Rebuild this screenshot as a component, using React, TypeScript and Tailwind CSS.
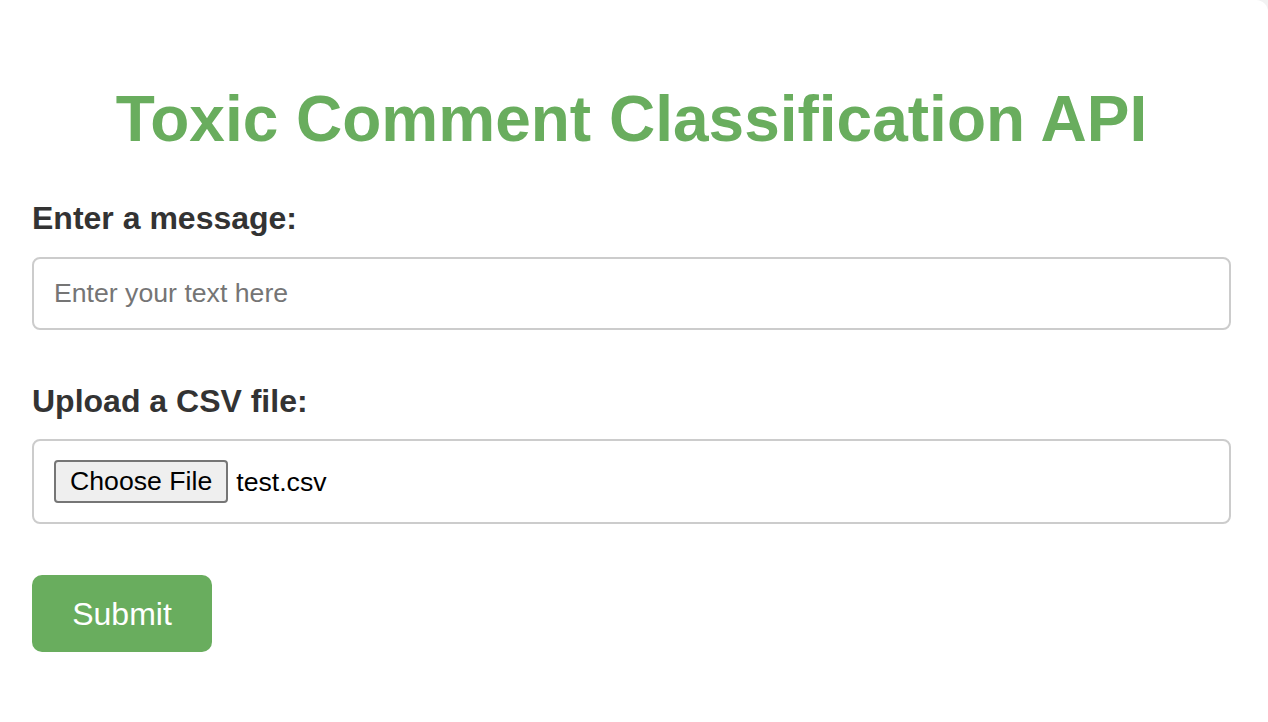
export default function App() {
  return (
    <div className="min-h-screen bg-[#f2f2f2] font-['Liberation_Sans',Arial,sans-serif]">
      <div className="min-h-[722px] bg-white rounded-tr-[12px] pl-8 pr-[37px] pt-[82px] pb-10">
        <h1 className="text-center text-[64px] leading-[74px] font-bold text-[#69ad5e]">
          Toxic Comment Classification API
        </h1>

        <form className="mt-[44px]" onSubmit={(e) => e.preventDefault()}>
          <label htmlFor="message" className="block text-[32px] leading-[37px] font-bold text-[#333]">
            Enter a message:
          </label>
          <input
            id="message"
            type="text"
            placeholder="Enter your text here"
            className="mt-5 block w-full h-[73px] px-5 text-[26.67px] text-black border-2 border-[#ccc] rounded-[8px] outline-none placeholder:text-[#757575]"
          />

          <label className="mt-[53px] block text-[32px] leading-[37px] font-bold text-[#333]">
            Upload a CSV file:
          </label>
          <div className="mt-[19px] h-[85px] flex items-center px-5 border-2 border-[#ccc] rounded-[8px]">
            <button
              type="button"
              className="h-[43px] px-[14px] text-[26.67px] leading-none text-black bg-[#efefef] border-2 border-[#767676] rounded-[4px]"
            >
              Choose File
            </button>
            <span className="ml-2 text-[26.67px] text-black">test.csv</span>
          </div>

          <button
            type="submit"
            className="mt-[51px] w-[180px] h-[77px] bg-[#69ad5e] text-white text-[32px] rounded-[10px]"
          >
            Submit
          </button>
        </form>
      </div>
    </div>
  );
}
